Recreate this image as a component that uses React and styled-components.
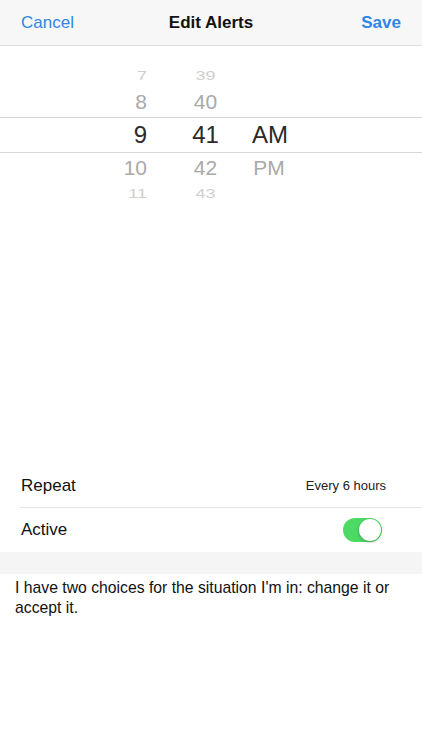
import React, { useState } from 'react';
import styled, { createGlobalStyle } from 'styled-components';

const GlobalStyle = createGlobalStyle`
  html, body {
    margin: 0;
    padding: 0;
    background: #ffffff;
  }
  body {
    font-family: "Liberation Sans", Arial, sans-serif;
    -webkit-font-smoothing: antialiased;
  }
`;

const Screen = styled.div`
  width: 422px;
  height: 750px;
  display: flex;
  flex-direction: column;
  background: #ffffff;
  overflow: hidden;
`;

const NavBar = styled.div`
  height: 45px;
  display: flex;
  align-items: center;
  justify-content: space-between;
  padding: 0 21px;
  background: #f7f7f7;
  border-bottom: 1px solid #dcdcdc;
  flex-shrink: 0;
`;

const NavButton = styled.div`
  font-size: 17px;
  color: #2e86e6;
  font-weight: ${props => (props.$bold ? 700 : 400)};
  cursor: pointer;
  width: 70px;
  text-align: ${props => props.$align || 'left'};
`;

const NavTitle = styled.div`
  font-size: 17px;
  font-weight: 700;
  color: #111;
`;

const Picker = styled.div`
  padding-top: 19px;
  height: 399px;
  flex-shrink: 0;
`;

const PickerRow = styled.div`
  display: grid;
  grid-template-columns: 147px 105px 34px;
  align-items: center;
  height: ${props => props.$height}px;
  border-top: ${props => (props.$selected ? '1px solid #d6d6d6' : 'none')};
  border-bottom: ${props => (props.$selected ? '1px solid #d6d6d6' : 'none')};
  box-sizing: border-box;
`;

const Cell = styled.div`
  text-align: ${props => props.$align};
  padding-left: ${props => props.$pad || 0}px;
  font-size: ${props => props.$size}px;
  color: ${props => props.$color};
  transform: scaleY(${props => props.$squash || 1});
  line-height: 1;
  white-space: nowrap;
`;

const Settings = styled.div`
  display: flex;
  flex-direction: column;
`;

const SettingRow = styled.div`
  height: 44px;
  display: flex;
  align-items: center;
  justify-content: space-between;
  margin-left: 20px;
  padding: 0 40px 0 1px;
  border-bottom: ${props => (props.$divider ? '1px solid #e4e4e4' : 'none')};
  box-sizing: border-box;
`;

const SettingLabel = styled.div`
  font-size: 17px;
  color: #111;
`;

const SettingValue = styled.div`
  font-size: 13px;
  color: #222;
  margin-right: -4px;
`;

const Toggle = styled.div`
  width: 39px;
  height: 24px;
  border-radius: 12px;
  background: ${props => (props.$on ? '#4cd964' : '#e5e5e5')};
  display: flex;
  align-items: center;
  justify-content: ${props => (props.$on ? 'flex-end' : 'flex-start')};
  padding: 1px;
  box-sizing: border-box;
  cursor: pointer;
`;

const Knob = styled.div`
  width: 22px;
  height: 22px;
  border-radius: 50%;
  background: #ffffff;
  box-shadow: 0 1px 3px rgba(0, 0, 0, 0.3);
`;

const Band = styled.div`
  height: 22px;
  background: #f5f5f5;
`;

const Quote = styled.p`
  margin: 0;
  padding: 4px 15px;
  font-size: 15.75px;
  line-height: 20px;
  color: #111;
`;

const rows = [
  { h: 22, hour: '7', min: '39', ap: '', size: 18, color: '#cfcfcf', squash: 0.68 },
  { h: 30, hour: '8', min: '40', ap: '', size: 21, color: '#a9a9a9', squash: 0.92 },
  { h: 36, hour: '9', min: '41', ap: 'AM', size: 24, color: '#2a2a2a', selected: true },
  { h: 30, hour: '10', min: '42', ap: 'PM', size: 21, color: '#a9a9a9', squash: 0.92 },
  { h: 22, hour: '11', min: '43', ap: '', size: 18, color: '#cfcfcf', squash: 0.68 },
];

function App() {
  const [active, setActive] = useState(true);

  return (
    <Screen>
      <GlobalStyle />
      <NavBar>
        <NavButton>Cancel</NavButton>
        <NavTitle>Edit Alerts</NavTitle>
        <NavButton $bold $align="right">Save</NavButton>
      </NavBar>

      <Picker>
        {rows.map((r, i) => (
          <PickerRow key={i} $height={r.h} $selected={r.selected}>
            <Cell $align="right" $size={r.size} $color={r.color} $squash={r.squash}>{r.hour}</Cell>
            <Cell $align="center" $pad={12} $size={r.size} $color={r.color} $squash={r.squash}>{r.min}</Cell>
            <Cell $align="center" $size={r.size} $color={r.color} $squash={r.squash}>{r.ap}</Cell>
          </PickerRow>
        ))}
      </Picker>

      <Settings>
        <SettingRow $divider>
          <SettingLabel>Repeat</SettingLabel>
          <SettingValue>Every 6 hours</SettingValue>
        </SettingRow>
        <SettingRow>
          <SettingLabel>Active</SettingLabel>
          <Toggle $on={active} onClick={() => setActive(!active)}>
            <Knob />
          </Toggle>
        </SettingRow>
      </Settings>

      <Band />
      <Quote>I have two choices for the situation I'm in: change it or accept it.</Quote>
    </Screen>
  );
}

export default App;
